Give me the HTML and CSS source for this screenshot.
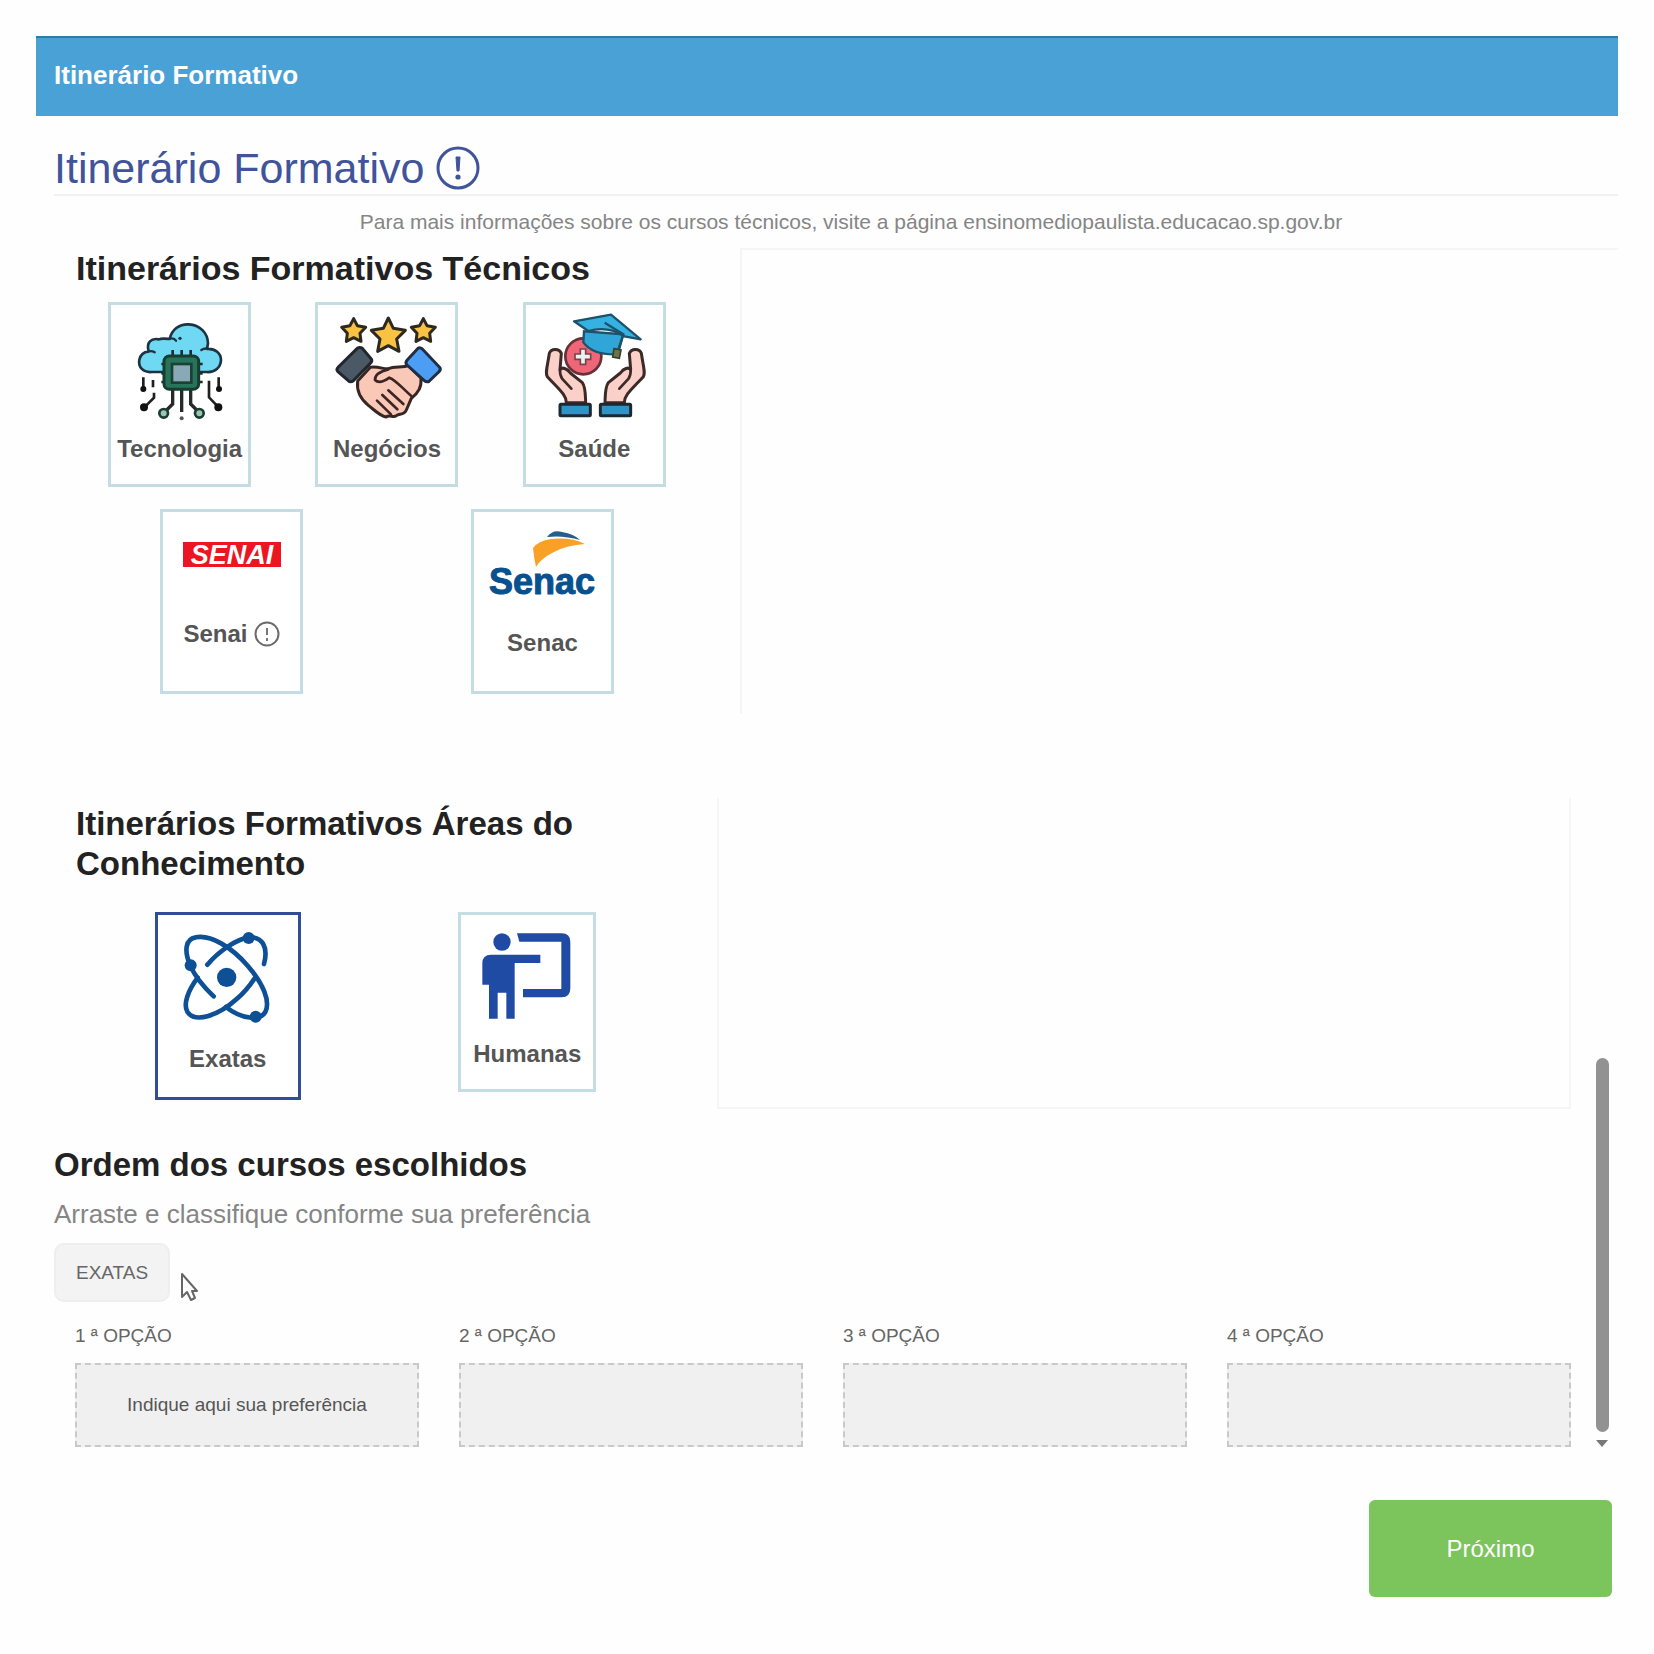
FILE: index.html
```html
<!DOCTYPE html>
<html lang="pt-BR">
<head>
  <meta charset="utf-8">
  <meta name="viewport" content="width=device-width, initial-scale=1">
  <title>Itinerário Formativo</title>
  <link rel="stylesheet" href="styles.css">
</head>
<body>
  <div class="page">
    <header class="topbar">Itinerário Formativo</header>

    <main>
      <div class="title-row">
        <h1 class="title">Itinerário Formativo</h1>
        <svg class="title-icon" viewBox="0 0 44 44" aria-hidden="true">
          <circle cx="22" cy="22" r="20" fill="none" stroke="#40539b" stroke-width="3"/>
          <path d="M20 11h4l-1 14h-2z" fill="#40539b" stroke="#40539b"/>
          <circle cx="22" cy="31" r="2.6" fill="#40539b"/>
        </svg>
      </div>
      <p class="info">Para mais informações sobre os cursos técnicos, visite a página <a href="#">ensinomediopaulista.educacao.sp.gov.br</a></p>

      <section class="technical">
        <div class="choices">
          <h2 class="heading heading-large">Itinerários Formativos Técnicos</h2>
          <div class="cards cards-technical">
            <button class="card" type="button">
              <svg class="card-icon" viewBox="105 63 330 330" aria-hidden="true">
                <path d="M185 246C158 248 144 230 148 209C151 195 162 186 176 184C168 158 184 143 207 148C215 144 228 146 239 147C245 119 267 102 296 103C330 105 353 128 354 160L351 177C376 175 393 190 393 210C392 232 375 248 350 246Z" fill="#6fd8f2" stroke="#1c3442" stroke-width="8" stroke-linejoin="round"/>
                <path d="M240 146q12-3 18 6M354 176q-12-2-20 4M176 184q10-2 18 3" fill="none" stroke="#1c3442" stroke-width="7" stroke-linecap="round"/>
                <circle cx="270" cy="145" r="5" fill="#1c3442"/>
                <path d="M248 180v20M275 180v20M302 180v20M214 222h14M214 250h14M214 276h14M322 222h16M322 250h16M322 276h16" stroke="#222b2a" stroke-width="8"/>
                <path d="M248 300v42l-18 18M302 300v42l18 18M275 300v66" fill="none" stroke="#282a2a" stroke-width="10"/>
                <path d="M160 262v30M189 270v22M192 308v15l-26 26M386 262v30M357 272v50l26 27" fill="none" stroke="#202020" stroke-width="8"/>
                <circle cx="160" cy="297" r="9" fill="#111"/><circle cx="162" cy="352" r="12" fill="#111"/>
                <circle cx="387" cy="297" r="9" fill="#111"/><circle cx="385" cy="352" r="12" fill="#111"/>
                <circle cx="275" cy="385" r="6" fill="#555"/>
                <circle cx="221" cy="370" r="13" fill="#9cc5b3" stroke="#1b3c30" stroke-width="8"/>
                <circle cx="328" cy="370" r="13" fill="#9cc5b3" stroke="#1b3c30" stroke-width="8"/>
                <rect x="222" y="198" width="104" height="100" rx="16" fill="#28745a" stroke="#173d31" stroke-width="9"/>
                <rect x="246" y="222" width="58" height="56" fill="#8aa9b6" stroke="#1b4034" stroke-width="8"/>
              </svg>
              <span class="card-label">Tecnologia</span>
            </button>
            <button class="card" type="button">
              <svg class="card-icon" viewBox="93 63 330 330" aria-hidden="true">
                <g fill="#f8c342" stroke="#2d2820" stroke-linejoin="round">
                  <path d="M262 84L277 115L313 121L287 147L294 184L262 167L230 184L237 147L211 121L247 115Z" stroke-width="9"/>
                  <path d="M158 86L169 107L194 112L177 130L180 154L158 143L136 154L139 130L122 112L147 107Z" stroke-width="9"/>
                  <path d="M367 86L378 107L403 112L386 130L389 154L367 143L345 154L348 130L331 112L356 107Z" stroke-width="9"/>
                </g>
                <path d="M208 232C231 228 251 239 262 236C281 228 307 234 322 226L360 264C362 291 353 307 331 325L316 360C309 377 294 370 286 377C276 384 266 373 255 381C239 379 222 362 202 346C179 327 166 303 170 273Z" fill="#fac8b7" stroke="#362724" stroke-width="9" stroke-linejoin="round"/>
                <path d="M262 238C242 243 221 254 222 270C233 281 251 273 265 263C286 271 301 292 331 318M262 301L307 342M244 315L289 358M228 332L270 373" fill="none" stroke="#3c2523" stroke-width="8" stroke-linecap="round" stroke-linejoin="round"/>
                <path d="M170 174Q177 170 184 175L211 207Q215 215 207 221L156 273Q148 278 141 271L110 244Q105 238 112 231Z" fill="#4b5866" stroke="#22262d" stroke-width="9"/>
                <path d="M351 175Q357 171 364 177L416 232Q421 239 413 246L384 274Q377 278 369 271L318 225Q312 218 318 211Z" fill="#4c9df4" stroke="#202d42" stroke-width="9"/>
              </svg>
              <span class="card-label">Negócios</span>
            </button>
            <button class="card" type="button">
              <svg class="card-icon" viewBox="84 63 330 330" aria-hidden="true">
                <circle cx="217" cy="199" r="54" fill="#ee6678" stroke="#663139" stroke-width="8"/>
                <path d="M208 177h16v15h15v16h-15v15h-16v-15h-16v-16h16z" fill="#e8f4f4" stroke="#7e4148" stroke-width="5"/>
                <path d="M219 124L217 157Q246 196 320 193L337 133Z" fill="#30a6d8" stroke="#1c526a" stroke-width="7"/>
                <path d="M189 94L300 74L389 148L340 139Q291 106 232 123Z" fill="#36b2e2" stroke="#1c526a" stroke-width="7" stroke-linejoin="round"/>
                <path d="M281 98L337 133L321 182" fill="none" stroke="#1c526a" stroke-width="7"/>
                <path d="M309 176l21 4l-5 25l-20-4z" fill="#6d7548" stroke="#35412f" stroke-width="5"/>
                <path id="hand" d="M166 338C166 315 145 299 109 260C102 248 109 231 115 190C121 174 145 176 151 190L147 239C153 230 168 235 178 249L214 278C224 291 223 312 224 338Z" fill="#fbd0c8" stroke="#3c2928" stroke-width="9" stroke-linejoin="round"/>
                <path d="M147 239Q146 256 154 267L181 296" fill="none" stroke="#3c2928" stroke-width="8" stroke-linecap="round"/>
                <path d="M340 338C340 315 361 299 397 260C404 248 397 231 391 190C385 174 361 176 355 190L359 239C353 230 338 235 328 249L292 278C282 291 283 312 282 338Z" fill="#fbd0c8" stroke="#3c2928" stroke-width="9" stroke-linejoin="round"/>
                <path d="M359 239Q360 256 352 267L325 296" fill="none" stroke="#3c2928" stroke-width="8" stroke-linecap="round"/>
                <rect x="147" y="343" width="91" height="34" rx="3" fill="#3192c5" stroke="#1d2930" stroke-width="9"/>
                <rect x="268" y="343" width="91" height="34" rx="3" fill="#3192c5" stroke="#1d2930" stroke-width="9"/>
              </svg>
              <span class="card-label">Saúde</span>
            </button>
          </div>
          <div class="cards">
            <button class="card" type="button">
              <svg class="card-icon icon-senai" viewBox="0 0 110 88" aria-hidden="true">
                <rect x="7" y="24" width="98" height="25" fill="#ec1622"/>
                <text class="senai-text" x="56" y="46" text-anchor="middle">SENAI</text>
              </svg>
              <span class="card-label">Senai
                <svg class="label-icon" viewBox="0 0 26 26" aria-hidden="true">
                  <circle cx="13" cy="13" r="11.5" fill="none" stroke="#6b6b6b" stroke-width="2"/>
                  <path d="M13 7v7M13 17v3" stroke="#777" stroke-width="2"/>
                </svg>
              </span>
            </button>
            <button class="card" type="button">
              <svg class="card-icon icon-senac" viewBox="0 0 110 97" aria-hidden="true">
                <path d="M60 19Q66 11 75 14Q87 16 93 22Q76 17 60 19Z" fill="#245e8e"/>
                <path d="M46 30Q51 23 64 21Q84 19 98 26Q80 27 67 34Q53 41 49 49Q47 40 46 30Z" fill="#f9a126"/>
                <text class="senac-text" x="55" y="76" text-anchor="middle">Senac</text>
              </svg>
              <span class="card-label">Senac</span>
            </button>
          </div>
        </div>
        <div class="detail-panel"></div>
      </section>

      <div class="lower">
        <div class="lower-content">
          <section class="areas">
            <div class="choices">
              <h2 class="heading">Itinerários Formativos Áreas do Conhecimento</h2>
              <div class="cards cards-areas">
                <button class="card card-selected" type="button" aria-pressed="true">
                  <svg class="card-icon" viewBox="126 90 330 330" aria-hidden="true">
                    <g fill="none" stroke="#0e5095" stroke-width="14" stroke-linecap="round">
                      <path d="M248 316C215 285 192 257 178 224C158 178 164 144 194 139C239 130 301 168 350 224C396 277 419 331 403 363C388 389 333 386 285 348"/>
                      <path d="M229 221C264 180 319 143 353 139C393 136 413 167 399 219"/>
                      <path d="M200 260C171 299 156 339 169 362C193 399 264 372 317 324Q347 298 370 263"/>
                    </g>
                    <g fill="#0e5095">
                      <circle cx="287" cy="259" r="29"/>
                      <circle cx="353" cy="141" r="18"/>
                      <circle cx="179" cy="223" r="18"/>
                      <circle cx="374" cy="377" r="18"/>
                    </g>
                  </svg>
                  <span class="card-label">Exatas</span>
                </button>
                <button class="card card-compact" type="button" aria-pressed="false">
                  <svg class="card-icon icon-humanas" viewBox="93 90 330 315" aria-hidden="true">
                    <g fill="#204ba5">
                      <circle cx="183" cy="153" r="26"/>
                      <path d="M150 191H298V216H221V383H196V305H170V383H144V281H124V217Q124 191 150 191Z"/>
                      <path d="M228 127H362Q388 127 388 153V292Q388 319 362 319H246V294H361V152H235Z"/>
                    </g>
                  </svg>
                  <span class="card-label">Humanas</span>
                </button>
              </div>
            </div>
            <div class="detail-panel detail-panel-end"></div>
          </section>

          <section class="order">
            <h2 class="heading">Ordem dos cursos escolhidos</h2>
            <p class="order-hint">Arraste e classifique conforme sua preferência</p>
            <div class="chips">
              <button class="chip" type="button">EXATAS</button>
              <svg class="pointer" viewBox="0 0 18 30" aria-hidden="true">
                <path d="M2 2V25L7 20L11 28L15 26L12 19H17Z" fill="#fff" stroke="#666" stroke-width="2" stroke-linejoin="round"/>
              </svg>
            </div>
            <div class="options">
              <div class="option"><h3 class="option-name">1 ª OPÇÃO</h3><div class="dropzone">Indique aqui sua preferência</div></div>
              <div class="option"><h3 class="option-name">2 ª OPÇÃO</h3><div class="dropzone"></div></div>
              <div class="option"><h3 class="option-name">3 ª OPÇÃO</h3><div class="dropzone"></div></div>
              <div class="option"><h3 class="option-name">4 ª OPÇÃO</h3><div class="dropzone"></div></div>
            </div>
          </section>
        </div>
        <div class="scrollbar" aria-hidden="true">
          <div class="scroll-thumb"></div>
          <div class="scroll-arrow"></div>
        </div>
      </div>
    </main>

    <footer class="actions">
      <button class="next" type="button">Próximo</button>
    </footer>
  </div>
</body>
</html>
```

FILE: styles.css
```css
* {
  box-sizing: border-box;
}

body {
  margin: 0;
  background: #fefefe;
  color: #222;
  font-family: "Liberation Sans", Arial, sans-serif;
}

h1, h2, h3, p {
  margin: 0;
}

button {
  font-family: inherit;
  cursor: pointer;
}

.page {
  padding: 36px;
}

.topbar {
  height: 80px;
  padding-left: 18px;
  border-top: 2px solid #2c7fa3;
  background: #4aa1d6;
  color: #fff;
  font-size: 26px;
  font-weight: bold;
  line-height: 74px;
}

.title-row {
  display: flex;
  align-items: center;
  gap: 12px;
  margin-left: 18px;
  padding-top: 26px;
  border-bottom: 2px solid #f1f1f1;
}

.title {
  color: #40539b;
  font-size: 43px;
  font-weight: normal;
  line-height: 52px;
}

.title-icon {
  width: 44px;
  height: 44px;
}

.info {
  padding: 12px 0 12px 48px;
  color: #858585;
  font-size: 21px;
  line-height: 28px;
  text-align: center;
}

.info a {
  color: inherit;
  text-decoration: none;
}

.technical {
  display: grid;
  grid-template-columns: 89fr 111fr;
  min-height: 466px;
}

.choices {
  padding: 0 42px 0 40px;
}

.heading {
  font-size: 33px;
  font-weight: bold;
  line-height: 40px;
}

.heading-large {
  font-size: 34px;
}

.cards {
  display: flex;
  justify-content: space-around;
  align-items: flex-start;
}

.cards-technical {
  margin: 14px 0 22px;
}

.cards-areas {
  margin-top: 28px;
}

.card {
  display: flex;
  flex-direction: column;
  align-items: center;
  gap: 13px;
  width: 143px;
  height: 185px;
  padding: 6px 0 0;
  border: 3px solid #c3dde2;
  background: #fff;
}

.card-selected {
  width: 146px;
  height: 188px;
  border-color: #314d94;
}

.card-compact {
  width: 138px;
  height: 180px;
}

.card-icon {
  flex: none;
  width: 110px;
  height: 110px;
}

.icon-senai {
  height: 88px;
}

.icon-senac {
  height: 97px;
}

.icon-humanas {
  height: 105px;
}

.senai-text {
  fill: #fff;
  font-size: 27px;
  font-style: italic;
  font-weight: bold;
}

.senac-text {
  fill: #07518f;
  stroke: #07518f;
  stroke-width: 1px;
  font-size: 36px;
  font-weight: bold;
}

.card-label {
  display: flex;
  align-items: center;
  gap: 6px;
  color: #555;
  font-size: 24px;
  font-weight: bold;
  line-height: 30px;
}

.label-icon {
  width: 26px;
  height: 26px;
}

.detail-panel {
  border: 2px solid #f4f5f5;
  border-right: 0;
  border-bottom: 0;
}

.lower {
  display: flex;
  margin-top: 84px;
}

.lower-content {
  flex: 1;
  min-width: 0;
}

.areas {
  display: grid;
  grid-template-columns: 681fr 854fr;
  min-height: 311px;
}

.areas .choices {
  padding-top: 6px;
}

.detail-panel-end {
  border: 2px solid #f4f5f5;
  border-top: 0;
}

.order {
  padding: 36px 0 0 18px;
}

.order-hint {
  padding: 11px 0;
  color: #858585;
  font-size: 26px;
  line-height: 36px;
}

.chips {
  display: flex;
  align-items: flex-end;
  gap: 10px;
}

.chip {
  height: 59px;
  padding: 0 20px;
  border: 2px solid #eee;
  border-radius: 10px;
  background: #f3f3f3;
  color: #666;
  font-size: 19px;
}

.pointer {
  width: 18px;
  height: 30px;
}

.options {
  display: grid;
  grid-template-columns: repeat(4, 1fr);
  gap: 40px;
  padding: 22px 0 0 21px;
}

.option-name {
  color: #666;
  font-size: 19px;
  font-weight: normal;
  line-height: 24px;
}

.dropzone {
  display: flex;
  align-items: center;
  justify-content: center;
  height: 84px;
  margin-top: 15px;
  border: 2px dashed #c9c9c9;
  background: #f0f0f0;
  color: #555;
  font-size: 19px;
}

.scrollbar {
  display: flex;
  flex-direction: column;
  align-items: center;
  justify-content: flex-end;
  gap: 8px;
  width: 20px;
  margin: 0 6px 0 21px;
}

.scroll-thumb {
  width: 13px;
  height: 374px;
  border-radius: 7px;
  background: #929292;
}

.scroll-arrow {
  border: 6px solid transparent;
  border-top: 7px solid #777;
  border-bottom: 0;
}

.actions {
  display: flex;
  justify-content: flex-end;
  padding: 53px 6px 0 0;
}

.next {
  width: 243px;
  height: 97px;
  border: 0;
  border-radius: 6px;
  background: #7cc45c;
  color: #fff;
  font-size: 24px;
}
```
